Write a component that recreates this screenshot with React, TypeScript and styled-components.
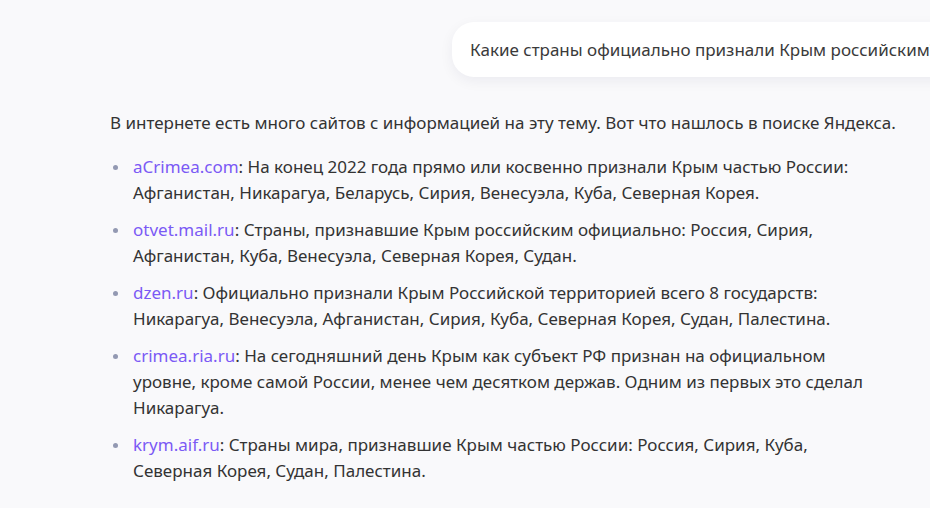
import React from "react";
import styled, { createGlobalStyle } from "styled-components";

const Global = createGlobalStyle`
  html, body { margin: 0; padding: 0; background: #f9f9fb; }
  * { box-sizing: border-box; }
`;

const Page = styled.div`
  width: 930px;
  height: 508px;
  overflow: hidden;
  background: #f9f9fb;
  font-family: "Noto Sans", "Open Sans", sans-serif;
  color: #333333;
`;

const Column = styled.div`
  padding: 22px 0 0 110px;
  display: flex;
  flex-direction: column;
`;

const UserRow = styled.div`
  display: flex;
  padding-left: 342px;
  margin-bottom: 33px;
`;

const UserBubble = styled.div`
  flex-shrink: 0;
  height: 55px;
  display: flex;
  align-items: center;
  padding: 0 24px 0 18px;
  background: #ffffff;
  border-radius: 22px;
  box-shadow: 0 4px 14px rgba(20, 20, 70, 0.06);
  font-size: 17px;
  line-height: 24px;
  white-space: nowrap;
  color: #3a3a3a;
`;

const Answer = styled.div`
  font-size: 17px;
  line-height: 26px;
`;

const Intro = styled.p`
  margin: 0 0 18px;
  white-space: nowrap;
`;

const List = styled.ul`
  margin: 0;
  padding: 0;
  list-style: none;
  width: 770px;
`;

const Item = styled.li`
  position: relative;
  padding-left: 23px;
  margin-bottom: 11px;

  &::before {
    content: "";
    position: absolute;
    left: 3px;
    top: 11px;
    width: 5px;
    height: 5px;
    border-radius: 50%;
    background: #9399b2;
  }
`;

const Source = styled.a`
  color: #7b5af5;
  text-decoration: none;
`;

const items = [
  {
    src: "aCrimea.com",
    text: "На конец 2022 года прямо или косвенно признали Крым частью России: Афганистан, Никарагуа, Беларусь, Сирия, Венесуэла, Куба, Северная Корея.",
  },
  {
    src: "otvet.mail.ru",
    text: "Страны, признавшие Крым российским официально: Россия, Сирия, Афганистан, Куба, Венесуэла, Северная Корея, Судан.",
  },
  {
    src: "dzen.ru",
    text: "Официально признали Крым Российской территорией всего 8 государств: Никарагуа, Венесуэла, Афганистан, Сирия, Куба, Северная Корея, Судан, Палестина.",
  },
  {
    src: "crimea.ria.ru",
    text: "На сегодняшний день Крым как субъект РФ признан на официальном уровне, кроме самой России, менее чем десятком держав. Одним из первых это сделал Никарагуа.",
  },
  {
    src: "krym.aif.ru",
    text: "Страны мира, признавшие Крым частью России: Россия, Сирия, Куба, Северная Корея, Судан, Палестина.",
  },
];

export default function App() {
  return (
    <Page>
      <Global />
      <Column>
        <UserRow>
          <UserBubble>Какие страны официально признали Крым российским?</UserBubble>
        </UserRow>
        <Answer>
          <Intro>
            В интернете есть много сайтов с информацией на эту тему. Вот что нашлось в поиске Яндекса.
          </Intro>
          <List>
            {items.map((it) => (
              <Item key={it.src}>
                <Source href="#">{it.src}</Source>: {it.text}
              </Item>
            ))}
          </List>
        </Answer>
      </Column>
    </Page>
  );
}
